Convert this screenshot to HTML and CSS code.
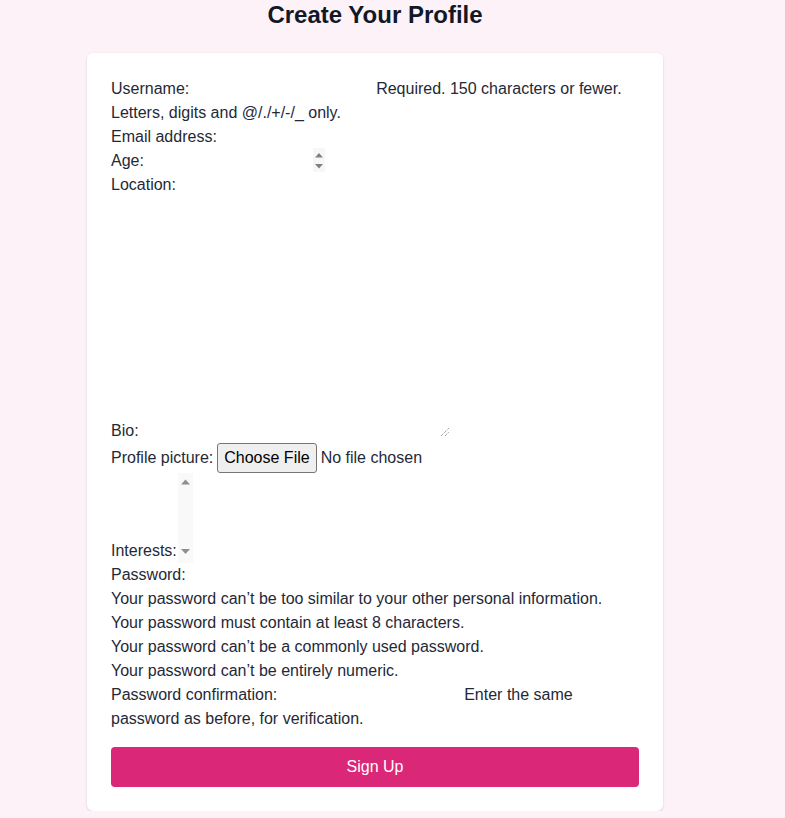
FILE: index.html
```html
<!DOCTYPE html>
<html lang="en">
<head>
<meta charset="utf-8">
<title>Create Your Profile</title>
<link rel="stylesheet" href="styles.css">
</head>
<body>
<main class="page">
  <h1 class="title">Create Your Profile</h1>
  <form class="card">
    <div class="field">
      <label for="u">Username:</label> <input id="u" class="input" type="text"> Required. 150 characters or fewer. Letters, digits and @/./+/-/_ only.
    </div>
    <div class="field">
      <label for="e">Email address:</label> <input id="e" class="input" type="text">
    </div>
    <div class="field">
      <label for="a">Age:</label> <span class="number"><input id="a" class="input" type="text"><span class="spin"><svg width="12" height="24" viewBox="0 0 12 24"><path d="M2 9.5 L6 5 L10 9.5 Z" fill="#808080"/><path d="M2 16 L6 20.5 L10 16 Z" fill="#808080"/></svg></span></span>
    </div>
    <div class="field">
      <label for="l">Location:</label> <input id="l" class="input" type="text">
    </div>
    <div class="field row-end">
      <label for="b">Bio:</label>
      <div class="textarea" id="b">
        <svg class="grip" width="10" height="10" viewBox="0 0 10 10"><path d="M1 9 L9 1 M5 9 L9 5" stroke="#7a7a7a" stroke-width="1" stroke-dasharray="1 1"/></svg>
      </div>
    </div>
    <div class="field row-center">
      <label>Profile picture:</label>
      <span class="file-btn">Choose File</span>
      <span class="file-name">No file chosen</span>
    </div>
    <div class="field row-end tight">
      <label>Interests:</label>
      <div class="listbox">
        <svg width="15" height="90" viewBox="0 0 15 90"><path d="M3 11.5 L7.5 6.5 L12 11.5 Z" fill="#8f8f8f"/><path d="M3 76 L7.5 81 L12 76 Z" fill="#8f8f8f"/></svg>
      </div>
    </div>
    <div class="field">
      <label for="p1">Password:</label> <input id="p1" class="input" type="password">
    </div>
    <ul class="help-list">
      <li>Your password can’t be too similar to your other personal information.</li>
      <li>Your password must contain at least 8 characters.</li>
      <li>Your password can’t be a commonly used password.</li>
      <li>Your password can’t be entirely numeric.</li>
    </ul>
    <div class="field">
      <label for="p2">Password confirmation:</label> <input id="p2" class="input" type="password"> Enter the same password as before, for verification.
    </div>
    <button class="submit" type="button">Sign Up</button>
  </form>
</main>
</body>
</html>
```

FILE: styles.css
```css
html, body {
  margin: 0;
  padding: 0;
  background: #fdf2f8;
}

body {
  font-family: "Liberation Sans", Arial, sans-serif;
  font-size: 16px;
  color: #1f2937;
}

.page {
  width: 576px;
  margin-left: 87px;
}

.title {
  margin: -1px 0 22px;
  font-size: 24px;
  line-height: 32px;
  font-weight: 700;
  text-align: center;
  color: #111827;
}

.card {
  background: #ffffff;
  border-radius: 6px;
  box-shadow: 0 1px 3px rgba(0, 0, 0, 0.1), 0 1px 2px rgba(0, 0, 0, 0.06);
  padding: 24px;
  line-height: 24px;
}

.field {
  line-height: 24px;
}

.input {
  display: inline-block;
  box-sizing: border-box;
  width: 178px;
  height: 24px;
  vertical-align: top;
  border: 0;
  padding: 0 2px;
  margin: 0;
  background: transparent;
  font: inherit;
  color: inherit;
  outline: none;
}

.number {
  display: inline-block;
  position: relative;
  width: 178px;
  height: 24px;
  vertical-align: top;
}

.spin {
  position: absolute;
  right: 1px;
  top: -1px;
  width: 12px;
  height: 24px;
  background: #f7f7f7;
}

.spin svg {
  display: block;
}

.row-end {
  display: flex;
  align-items: flex-end;
  gap: 4px;
}

.row-end.tight {
  gap: 1px;
}

.row-center {
  display: flex;
  align-items: center;
  height: 30px;
}

.textarea {
  position: relative;
  width: 308px;
  height: 240px;
  margin-bottom: 6px;
}

.grip {
  position: absolute;
  right: 1px;
  bottom: 0;
}

.file-btn {
  box-sizing: border-box;
  margin-left: 4px;
  height: 30px;
  padding: 0 6px;
  line-height: 28px;
  background: #efefef;
  border: 1px solid #767676;
  border-radius: 3px;
  color: #000000;
}

.file-name {
  margin-left: 4px;
}

.listbox {
  width: 15px;
  height: 90px;
  background: #f9f9f9;
}

.listbox svg {
  display: block;
}

.help-list {
  margin: 0;
  padding: 0;
  list-style: none;
}

.submit {
  display: block;
  width: 100%;
  height: 40px;
  margin-top: 16px;
  border: 0;
  border-radius: 4px;
  background: #db2777;
  color: #ffffff;
  font: inherit;
  cursor: pointer;
}
```
